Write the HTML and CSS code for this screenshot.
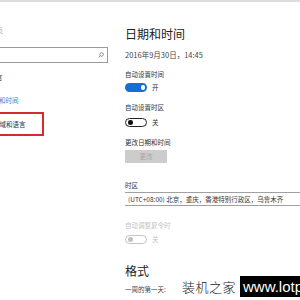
FILE: index.html
```html
<!DOCTYPE html>
<html lang="zh-CN">
<head>
<meta charset="utf-8">
<title>日期和时间</title>
<link rel="stylesheet" href="styles.css">
</head>
<body>
<div class="topline"></div>
<div class="window">
  <aside class="sidebar">
    <div class="nav-home">主页</div>
    <div class="search">
      <svg class="search-icon" width="6" height="6" viewBox="0 0 6 6"><circle cx="3.6" cy="2.4" r="1.8" fill="none" stroke="#777" stroke-width="0.8"/><line x1="2.3" y1="3.7" x2="0.5" y2="5.5" stroke="#777" stroke-width="0.8"/></svg>
    </div>
    <div class="nav-cat">时间和语言</div>
    <div class="nav-item active">日期和时间</div>
    <div class="nav-item boxed"><span class="nav-text">区域和语言</span></div>
  </aside>
  <main class="content">
    <h1 class="title">日期和时间</h1>
    <div class="date">2016年9月30日，14:45</div>
    <div class="label l1">自动设置时间</div>
    <div class="toggle-row t1"><span class="toggle on"><span class="knob"></span></span><span class="state">开</span></div>
    <div class="label l2">自动设置时区</div>
    <div class="toggle-row t2"><span class="toggle off"><span class="knob"></span></span><span class="state">关</span></div>
    <div class="label l3">更改日期和时间</div>
    <div class="button">更改</div>
    <div class="label l4">时区</div>
    <div class="select">(UTC+08:00) 北京，重庆，香港特别行政区，乌鲁木齐</div>
    <div class="label l5 disabled">自动调整夏令时</div>
    <div class="toggle-row t3 disabled"><span class="toggle off"><span class="knob"></span></span><span class="state">关</span></div>
    <h2 class="title t-format">格式</h2>
    <div class="label l6">一周的第一天:</div>
  </main>
</div>
<div class="watermark">
  <span class="wm-cn">装机之家</span>
  <span class="wm-box">www.lotp</span>
</div>
</body>
</html>
```
FILE: styles.css
```css
html, body {
  margin: 0;
  padding: 0;
  width: 300px;
  height: 300px;
  overflow: hidden;
  background: #fff;
  font-family: "Noto Sans CJK SC", "Noto Sans", sans-serif;
  color: #2b2b2b;
}
.topline {
  height: 2px;
  background: #dcdcdc;
}
.window {
  display: flex;
  height: 298px;
}
.sidebar {
  width: 125px;
  flex-shrink: 0;
  overflow: hidden;
  font-size: 6.5px;
}
.nav-home {
  margin-top: 25px;
  margin-left: -10px;
  line-height: 7px;
  height: 7px;
  color: #aaa;
}
.search {
  margin-top: 13px;
  margin-left: -10px;
  width: 118px;
  height: 16px;
  box-sizing: border-box;
  border: 1px solid #9a9a9a;
  display: flex;
  align-items: center;
  justify-content: flex-end;
  padding-right: 3px;
}
.nav-cat {
  margin-top: 11px;
  margin-left: -30px;
  line-height: 7px;
  height: 7px;
  white-space: nowrap;
  color: #333;
}
.nav-item {
  white-space: nowrap;
  line-height: 7px;
}
.nav-item.active {
  margin-top: 16px;
  margin-left: -14px;
  height: 7px;
  color: #3a86d6;
}
.nav-item.boxed {
  margin-top: 8px;
  margin-left: -20px;
  width: 64px;
  height: 24px;
  box-sizing: border-box;
  border: 2px solid #d52b2f;
  padding-left: 11px;
  padding-top: 7px;
  color: #333;
}
.content {
  flex: 1;
  min-width: 0;
  overflow: hidden;
  white-space: nowrap;
}
.title {
  margin: 25px 0 0 0;
  font-size: 12px;
  font-weight: 400;
  line-height: 13px;
  height: 13px;
  color: #222;
}
.date {
  margin-top: 10px;
  font-size: 7.5px;
  line-height: 9px;
  color: #444;
}
.label {
  font-size: 6.5px;
  line-height: 7px;
  height: 7px;
  color: #333;
}
.l1 { margin-top: 12px; }
.l2 { margin-top: 12px; }
.l3 { margin-top: 12px; }
.l4 { margin-top: 19px; }
.l5 { margin-top: 16px; }
.l6 { margin-top: 9px; color: #444; }
.label.disabled { color: #c4c4c4; }
.toggle-row {
  display: flex;
  align-items: center;
  gap: 5px;
  height: 9px;
}
.t1 { margin-top: 5px; }
.t2 { margin-top: 7px; }
.t3 { margin-top: 6px; }
.toggle {
  width: 22px;
  height: 9px;
  box-sizing: border-box;
  border-radius: 5px;
  display: flex;
  align-items: center;
  padding: 0 2px;
}
.toggle.on {
  background: #1270d2;
  justify-content: flex-end;
}
.toggle.off {
  border: 1.4px solid #222;
  justify-content: flex-start;
}
.knob {
  width: 4.5px;
  height: 4.5px;
  border-radius: 50%;
}
.toggle.on .knob { background: #fff; }
.toggle.off .knob { background: #111; }
.state {
  font-size: 6.5px;
  line-height: 7px;
  color: #333;
}
.disabled .toggle.off { border-color: #c2c2c2; }
.disabled .toggle.off .knob { background: #c2c2c2; }
.disabled .state { color: #c4c4c4; }
.button {
  margin-top: 4px;
  width: 42px;
  height: 13px;
  background: #cccccc;
  color: #a8a8a8;
  font-size: 6.5px;
  line-height: 13px;
  text-align: center;
}
.select {
  margin-top: 3px;
  margin-left: -2px;
  width: 200px;
  height: 14px;
  box-sizing: border-box;
  border: 1px solid #a0a0a0;
  font-size: 6.5px;
  line-height: 12px;
  padding-left: 4px;
  color: #333;
}
.t-format {
  margin-top: 20px;
}
.watermark {
  position: absolute;
  left: 182px;
  top: 276px;
  display: flex;
  align-items: center;
  white-space: nowrap;
}
.wm-cn {
  font-family: "Noto Sans CJK SC", sans-serif;
  font-weight: 300;
  font-size: 13px;
  line-height: 21px;
  letter-spacing: 0.5px;
  color: #1a1a1a;
  background: #fff;
  padding-right: 4px;
}
.wm-box {
  width: 60px;
  height: 21px;
  background: #000;
  color: #fff;
  font-family: "Liberation Sans", Arial, sans-serif;
  font-size: 15px;
  line-height: 21px;
  padding-left: 3px;
  overflow: hidden;
}
```
